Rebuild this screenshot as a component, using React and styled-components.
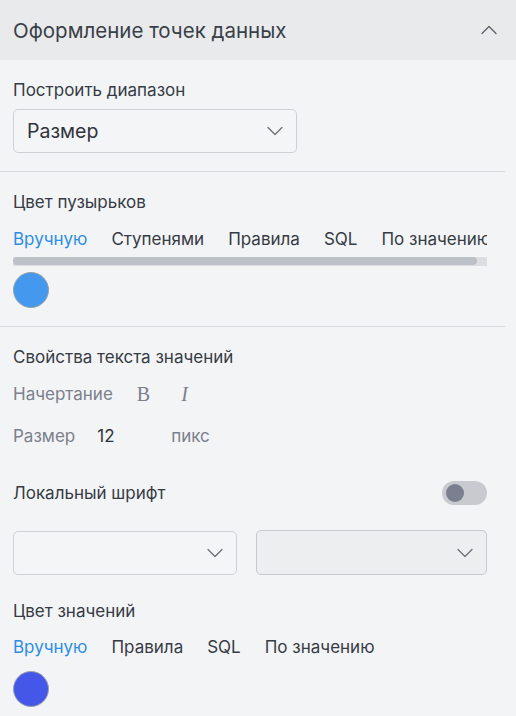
import React from "react";
import styled, { createGlobalStyle } from "styled-components";

const GlobalStyle = createGlobalStyle`
  html, body {
    margin: 0;
    padding: 0;
    background: #f3f4f6;
    font-family: Inter, "Liberation Sans", Arial, sans-serif;
  }
`;

const Chevron = ({ up, size = 16, color = "#6b7079" }) => (
  <svg width={size} height={size / 2 + 2} viewBox="0 0 16 9" fill="none">
    <path
      d={up ? "M1 8 L8 1 L15 8" : "M1 1 L8 8 L15 1"}
      stroke={color}
      strokeWidth="1.3"
      strokeLinecap="round"
      strokeLinejoin="round"
    />
  </svg>
);

export default function App() {
  return (
    <>
      <GlobalStyle />
      <Panel>
        <Header>
          <HeaderTitle>Оформление точек данных</HeaderTitle>
          <Chevron up size={16} color="#5c616a" />
        </Header>

        <Section>
          <Label>Построить диапазон</Label>
          <Select width="284px" height="44px">
            <SelectValue>Размер</SelectValue>
            <Chevron />
          </Select>
        </Section>
        <Divider />

        <Section>
          <Label>Цвет пузырьков</Label>
          <TabsScroll>
            <Tabs>
              <Tab active>Вручную</Tab>
              <Tab>Ступенями</Tab>
              <Tab>Правила</Tab>
              <Tab>SQL</Tab>
              <Tab>По значению</Tab>
            </Tabs>
          </TabsScroll>
          <ScrollTrack>
            <ScrollThumb />
          </ScrollTrack>
          <Swatch color="#4499ee" top="6px" />
        </Section>
        <Divider />

        <Section bottom="0">
          <Label>Свойства текста значений</Label>
          <PropRow top="17px">
            <Muted gap="24px">Начертание</Muted>
            <StyleBtn>B</StyleBtn>
            <StyleBtn italic>I</StyleBtn>
          </PropRow>
          <PropRow top="22px">
            <Muted gap="22px">Размер</Muted>
            <SizeValue>12</SizeValue>
            <Muted>пикс</Muted>
          </PropRow>
          <ToggleRow>
            <Label>Локальный шрифт</Label>
            <Toggle>
              <Knob />
            </Toggle>
          </ToggleRow>
          <SelectPair>
            <Select height="44px">
              <span />
              <Chevron />
            </Select>
            <Select height="45px" disabled>
              <span />
              <Chevron />
            </Select>
          </SelectPair>
          <Label top="26px">Цвет значений</Label>
          <Tabs top="16px">
            <Tab active>Вручную</Tab>
            <Tab>Правила</Tab>
            <Tab>SQL</Tab>
            <Tab>По значению</Tab>
          </Tabs>
          <Swatch color="#4557e8" top="14px" />
        </Section>
      </Panel>
    </>
  );
}

const Panel = styled.div`
  width: 516px;
  min-height: 716px;
  background: #f3f4f6;
  color: #363b44;
`;

const Header = styled.div`
  height: 60px;
  background: #e9eaec;
  display: flex;
  align-items: center;
  justify-content: space-between;
  padding: 0 19px 0 13px;
`;

const HeaderTitle = styled.h2`
  margin: 0;
  font-size: 20.5px;
  font-weight: 400;
  color: #3a3f47;
`;

const Section = styled.div`
  padding: 20px 11px ${({ bottom }) => bottom ?? "18px"} 13px;
  display: flex;
  flex-direction: column;
  align-items: flex-start;
`;

const Divider = styled.div`
  height: 1px;
  margin-right: 11px;
  background: #d9dbdf;
`;

const Label = styled.div`
  font-size: 17px;
  line-height: 20px;
  color: #363b44;
  margin-top: ${({ top }) => top || "0"};
`;

const Select = styled.div`
  box-sizing: border-box;
  width: ${({ width }) => width || "auto"};
  height: ${({ height }) => height};
  margin-top: 9px;
  border: 1px solid ${({ disabled }) => (disabled ? "#c6c9ce" : "#cdd0d5")};
  border-radius: 5px;
  background: ${({ disabled }) => (disabled ? "#edeef0" : "#f4f5f7")};
  display: flex;
  align-items: center;
  justify-content: space-between;
  padding: 0 13px 0 13px;
`;

const SelectValue = styled.span`
  font-size: 19.5px;
  color: #2f333a;
`;

const TabsScroll = styled.div`
  width: 474px;
  overflow: hidden;
`;

const Tabs = styled.div`
  display: flex;
  gap: 24px;
  margin-top: ${({ top }) => top || "17px"};
  white-space: nowrap;
`;

const Tab = styled.span`
  font-size: 17px;
  line-height: 20px;
  color: ${({ active }) => (active ? "#2b8ee6" : "#363b44")};
`;

const ScrollTrack = styled.div`
  width: 474px;
  height: 9px;
  margin-top: 8px;
  background: #dcdee2;
`;

const ScrollThumb = styled.div`
  width: 464px;
  height: 8px;
  border-radius: 4px;
  background: #bcc0c7;
`;

const Swatch = styled.div`
  box-sizing: border-box;
  width: 36px;
  height: 36px;
  margin-top: ${({ top }) => top};
  border-radius: 50%;
  background: ${({ color }) => color};
  border: 1px solid #9aa0a8;
`;

const PropRow = styled.div`
  display: flex;
  align-items: center;
  margin-top: ${({ top }) => top};
  line-height: 20px;
`;

const Muted = styled.span`
  font-size: 17px;
  color: #7b808b;
  margin-right: ${({ gap }) => gap || "0"};
`;

const StyleBtn = styled.span`
  font-family: "Liberation Serif", "Times New Roman", serif;
  font-size: 20px;
  font-style: ${({ italic }) => (italic ? "italic" : "normal")};
  color: #7b808b;
  margin-right: 31px;
`;

const SizeValue = styled.span`
  font-size: 17px;
  color: #2f333a;
  width: 74px;
`;

const ToggleRow = styled.div`
  width: 474px;
  display: flex;
  align-items: center;
  justify-content: space-between;
  margin-top: 35px;
`;

const Toggle = styled.div`
  box-sizing: border-box;
  width: 45px;
  height: 24px;
  border-radius: 12px;
  background: #c8cacf;
  display: flex;
  align-items: center;
  padding-left: 4px;
`;

const Knob = styled.div`
  width: 18px;
  height: 18px;
  border-radius: 50%;
  background: #7b8090;
`;

const SelectPair = styled.div`
  width: 474px;
  display: grid;
  grid-template-columns: 224px 231px;
  column-gap: 19px;
  align-items: end;
  margin-top: 25px;

  & > div {
    margin-top: 0;
  }
`;
